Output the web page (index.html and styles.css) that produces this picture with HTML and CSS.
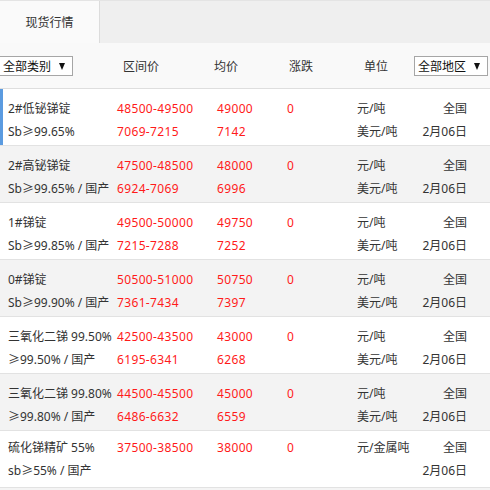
FILE: index.html
```html
<!DOCTYPE html>
<html lang="zh-CN">
<head>
<meta charset="utf-8">
<title>现货行情</title>
<link rel="stylesheet" href="styles.css">
</head>
<body>
<div class="tabs">
  <div class="tab active">现货行情</div>
</div>
<div class="head">
  <div class="hcell"><div class="sel sel-left"><span>全部类别</span><span class="arrow"></span></div></div>
  <div class="hcell">区间价</div>
  <div class="hcell">均价</div>
  <div class="hcell">涨跌</div>
  <div class="hcell">单位</div>
  <div class="hcell"><div class="sel"><span>全部地区</span><span class="arrow"></span></div></div>
</div>
<div class="rows">
  <div class="row first">
    <div class="c name"><span>2#低铋锑锭</span><span>Sb≥99.65%</span></div>
    <div class="c red"><span>48500-49500</span><span>7069-7215</span></div>
    <div class="c red"><span>49000</span><span>7142</span></div>
    <div class="c red"><span>0</span></div>
    <div class="c"><span>元/吨</span><span>美元/吨</span></div>
    <div class="c right"><span>全国</span><span>2月06日</span></div>
  </div>
  <div class="row alt">
    <div class="c name"><span>2#高铋锑锭</span><span>Sb≥99.65% / 国产</span></div>
    <div class="c red"><span>47500-48500</span><span>6924-7069</span></div>
    <div class="c red"><span>48000</span><span>6996</span></div>
    <div class="c red"><span>0</span></div>
    <div class="c"><span>元/吨</span><span>美元/吨</span></div>
    <div class="c right"><span>全国</span><span>2月06日</span></div>
  </div>
  <div class="row">
    <div class="c name"><span>1#锑锭</span><span>Sb≥99.85% / 国产</span></div>
    <div class="c red"><span>49500-50000</span><span>7215-7288</span></div>
    <div class="c red"><span>49750</span><span>7252</span></div>
    <div class="c red"><span>0</span></div>
    <div class="c"><span>元/吨</span><span>美元/吨</span></div>
    <div class="c right"><span>全国</span><span>2月06日</span></div>
  </div>
  <div class="row alt">
    <div class="c name"><span>0#锑锭</span><span>Sb≥99.90% / 国产</span></div>
    <div class="c red"><span>50500-51000</span><span>7361-7434</span></div>
    <div class="c red"><span>50750</span><span>7397</span></div>
    <div class="c red"><span>0</span></div>
    <div class="c"><span>元/吨</span><span>美元/吨</span></div>
    <div class="c right"><span>全国</span><span>2月06日</span></div>
  </div>
  <div class="row">
    <div class="c name"><span>三氧化二锑 99.50%</span><span>≥99.50% / 国产</span></div>
    <div class="c red"><span>42500-43500</span><span>6195-6341</span></div>
    <div class="c red"><span>43000</span><span>6268</span></div>
    <div class="c red"><span>0</span></div>
    <div class="c"><span>元/吨</span><span>美元/吨</span></div>
    <div class="c right"><span>全国</span><span>2月06日</span></div>
  </div>
  <div class="row alt">
    <div class="c name"><span>三氧化二锑 99.80%</span><span>≥99.80% / 国产</span></div>
    <div class="c red"><span>44500-45500</span><span>6486-6632</span></div>
    <div class="c red"><span>45000</span><span>6559</span></div>
    <div class="c red"><span>0</span></div>
    <div class="c"><span>元/吨</span><span>美元/吨</span></div>
    <div class="c right"><span>全国</span><span>2月06日</span></div>
  </div>
  <div class="row last">
    <div class="c name"><span>硫化锑精矿 55%</span><span>sb≥55% / 国产</span></div>
    <div class="c red"><span>37500-38500</span></div>
    <div class="c red"><span>38000</span></div>
    <div class="c red"><span>0</span></div>
    <div class="c"><span>元/金属吨</span></div>
    <div class="c right"><span>全国</span><span>2月06日</span></div>
  </div>
</div>
</body>
</html>
```

FILE: styles.css
```css
html, body {
  margin: 0;
  padding: 0;
  background: #f4f4f4;
  font-family: "Noto Sans", "Noto Sans CJK SC", sans-serif;
  font-size: 12px;
  color: #333;
  width: 490px;
  overflow: hidden;
}

.tabs {
  height: 43px;
  background: #efefef;
  border-top: 1px solid #e4e4e4;
  box-sizing: border-box;
  display: flex;
}

.tab {
  width: 99px;
  border-right: 1px solid #dcdcdc;
  background: #fafafa;
  display: flex;
  align-items: center;
  justify-content: center;
  padding-bottom: 1px;
}

.head {
  height: 46px;
  background: #f9f9f9;
  border-bottom: 1px solid #dedede;
  box-sizing: border-box;
  display: grid;
  grid-template-columns: 123px 91px 75px 75px 50px 76px;
  align-items: center;
  padding-top: 1px;
}

.sel {
  display: flex;
  align-items: center;
  justify-content: space-between;
  height: 20px;
  box-sizing: border-box;
  border: 1px solid #a6a6a6;
  background: #fff;
  color: #111;
  padding: 0 7px 0 3px;
  width: 74px;
}

.sel-left {
  margin-left: -1px;
}

.arrow {
  width: 0;
  height: 0;
  border-left: 3.5px solid transparent;
  border-right: 3.5px solid transparent;
  border-top: 7px solid #111;
  margin-top: 1px;
}

.rows {
  background: #fff;
}

.row {
  display: grid;
  grid-template-columns: 117px 100px 70px 70px 63px 47px;
  padding: 8px 0 2px 0;
  border-bottom: 1px solid #e2e2e2;
  background: #fff;
  line-height: 23px;
}

.row.alt {
  background: #f3f3f3;
}

.row.first {
  box-shadow: inset 3px 0 0 #5b9be0;
}

.row.last {
  padding-top: 5px;
  padding-bottom: 5px;
}

.c {
  display: flex;
  flex-direction: column;
  white-space: nowrap;
}

.name {
  padding-left: 8px;
}

.red {
  color: #ff1a1a;
  letter-spacing: 0.35px;
}

.right {
  align-items: flex-end;
}
```
